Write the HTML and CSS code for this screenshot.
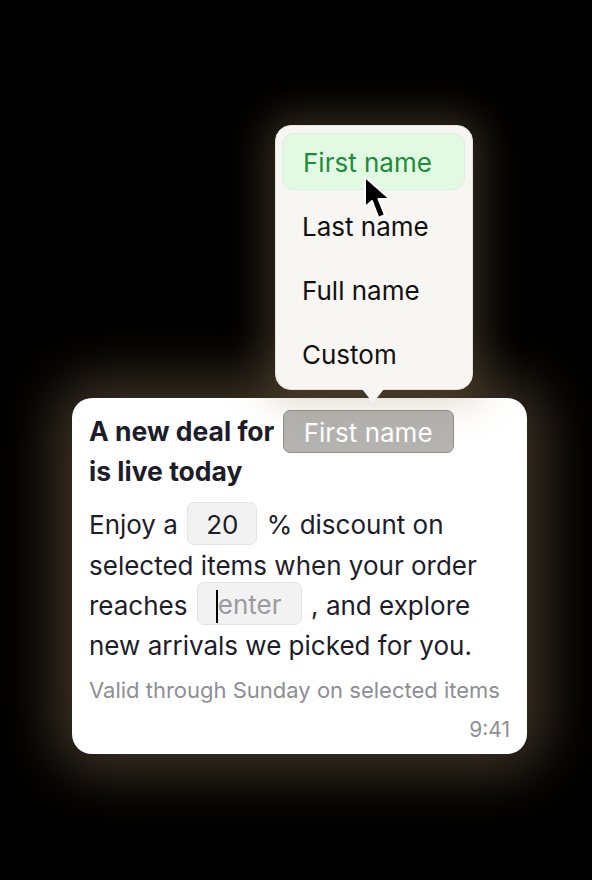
FILE: index.html
```html
<!DOCTYPE html>
<html lang="en">
<head>
  <meta charset="UTF-8">
  <title>Deal message</title>
  <link rel="stylesheet" href="styles.css">
</head>
<body>
  <div class="stage">
    <div class="menu">
      <div class="item active">First name</div>
      <div class="item">Last name</div>
      <div class="item">Full name</div>
      <div class="item">Custom</div>
      <svg class="pointer" width="32" height="48" viewBox="0 0 32 48">
        <path d="M2 2 L2 32 L9 26 L15.5 43 L22 40 L15.5 24 L27 24 Z" fill="#000" stroke="#fff" stroke-width="2" stroke-linejoin="round"/>
      </svg>
    </div>

    <div class="card">
      <h1 class="title">A new deal for <span class="chip">First name</span><br>is live today</h1>
      <p class="body">Enjoy a <span class="field">20</span> % discount on selected items when your order reaches <span class="field empty"><span class="caret"></span>enter</span> , and explore new arrivals we picked for you.</p>
      <p class="note">Valid through Sunday on selected items</p>
      <div class="time">9:41</div>
    </div>
  </div>
</body>
</html>
```

FILE: styles.css
```css
body {
  margin: 0;
  background: #000;
  font-family: Inter, "Noto Sans", sans-serif;
  color: #1d1d29;
}
.stage {
  width: 592px;
  height: 880px;
  padding-top: 125px;
  box-sizing: border-box;
  display: flex;
  flex-direction: column;
}
.menu {
  position: relative;
  z-index: 2;
  margin-left: 275px;
  width: 198px;
  box-sizing: border-box;
  padding: 7px 7px 7px 6px;
  background: #f8f6f2;
  border-radius: 16px;
  border: 1px solid #e6e1d8;
  box-shadow: 0 0 40px 10px rgba(150, 125, 90, 0.35);
  display: flex;
  flex-direction: column;
  gap: 7px;
}
.menu::after {
  content: "";
  position: absolute;
  left: 86px;
  bottom: -14px;
  width: 0;
  height: 0;
  border-left: 11px solid transparent;
  border-right: 11px solid transparent;
  border-top: 14px solid #f8f6f2;
}
.item {
  height: 57px;
  line-height: 59px;
  padding-left: 20px;
  font-size: 26px;
  color: #111;
  border-radius: 12px;
}
.item.active {
  background: #e2fae1;
  border: 1px solid #d6f2d5;
  height: 55px;
  line-height: 57px;
  color: #238a3c;
}
.pointer {
  position: absolute;
  left: 87px;
  top: 49px;
}
.card {
  position: relative;
  z-index: 1;
  margin-top: 8px;
  margin-left: 72px;
  width: 455px;
  box-sizing: border-box;
  padding: 14px 17px 12px 17px;
  background: #fff;
  border-radius: 20px;
  box-shadow: 0 0 60px 16px rgba(150, 125, 90, 0.45);
}
.title {
  margin: 0;
  font-size: 26.5px;
  font-weight: 700;
  line-height: 38px;
}
.chip {
  display: inline-block;
  box-sizing: border-box;
  height: 43px;
  line-height: 43px;
  margin: -5px 0 -1px 2px;
  padding: 0 20px;
  background: #b4b3b1;
  border: 1px solid #8f8e8c;
  border-radius: 7px;
  color: #fff;
  font-size: 26px;
  font-weight: 400;
  vertical-align: middle;
}
.body {
  margin: 15px 0 0;
  font-size: 26px;
  line-height: 40px;
}
.field {
  display: inline-block;
  box-sizing: border-box;
  height: 43px;
  line-height: 43px;
  padding: 0 18px;
  margin: -7px 2px 1px;
  background: #f2f2f2;
  border: 1px solid #e3e3e3;
  border-radius: 7px;
  vertical-align: middle;
}
.field.empty {
  width: 105px;
  padding-left: 19px;
  color: #9a9aa0;
}
.caret {
  display: inline-block;
  width: 2px;
  height: 33px;
  background: #000;
  vertical-align: middle;
  margin-left: -1px;
}
.note {
  margin: 11px 0 0;
  font-size: 22px;
  line-height: 26px;
  color: #8e8e95;
}
.time {
  margin-top: 15px;
  text-align: right;
  font-size: 21px;
  line-height: 24px;
  color: #8e8e95;
}
```
